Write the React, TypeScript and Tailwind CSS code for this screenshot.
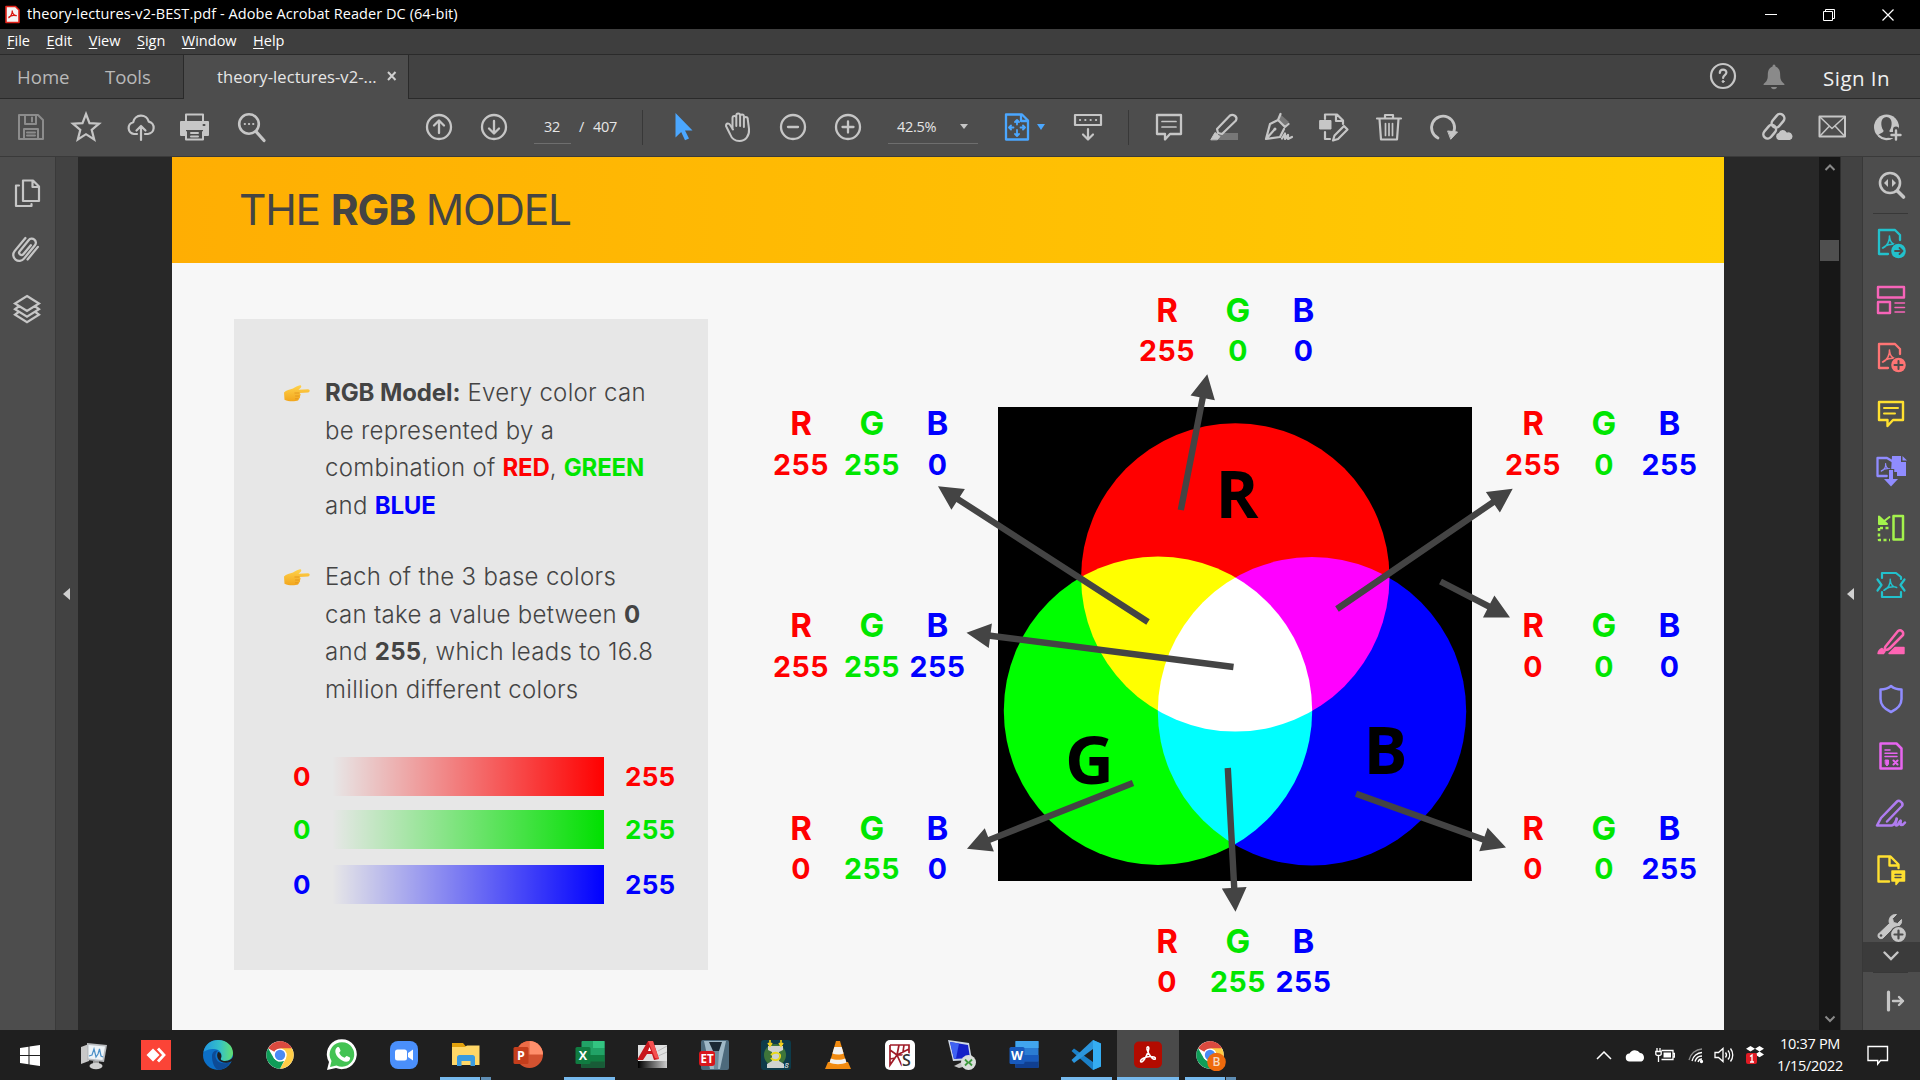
import type { ReactNode } from "react";

const RED = "#ff0000";
const GREEN = "#00e600";
const BLUE = "#0000ff";

/* 32-unit icon canvas shared by all toolbars */
function Ic({ children, c = "#c6c6c6", w = 2, s = 32 }: { children: ReactNode; c?: string; w?: number; s?: number }) {
  return (
    <svg width={s} height={s} viewBox="0 0 32 32" fill="none" stroke={c} strokeWidth={w} strokeLinejoin="round" strokeLinecap="round" className="block shrink-0">
      {children}
    </svg>
  );
}

function Cell({ children }: { children: ReactNode }) {
  return <div className="flex h-full w-[55px] shrink-0 items-center justify-center">{children}</div>;
}

function MenuItem({ k, rest }: { k: string; rest: string }) {
  return (
    <span>
      <span className="underline underline-offset-2">{k}</span>
      {rest}
    </span>
  );
}

function TitleBar() {
  return (
    <div className="flex h-[29px] items-center bg-black text-white">
      <svg width="15" height="19" viewBox="0 0 15 19" className="ml-[5px] shrink-0">
        <path d="M1 1.500h9.500L14 5v12.500H1z" fill="#f4f4f4" stroke="#e2231a" strokeWidth="1.600" strokeLinejoin="round" />
        <path d="M3.500 13c2-1 4-4.500 3.800-7.500M7.200 6c.3 3 2 4.600 4.600 4.700M3.500 12.500c2-2 5-2.500 8-1.800" fill="none" stroke="#d9150d" strokeWidth="1.300" />
      </svg>
      <span className="ml-[7px] whitespace-nowrap text-[14.500px] leading-none tracking-[0.070px]">theory-lectures-v2-BEST.pdf - Adobe Acrobat Reader DC (64-bit)</span>
      <svg width="12" height="12" viewBox="0 0 12 12" className="ml-auto" stroke="#fff">
        <path d="M0 5.500h12" />
      </svg>
      <svg width="12" height="12" viewBox="0 0 12 12" className="ml-[46px]" stroke="#fff" fill="none">
        <path d="M.5 2.500h9v9h-9zM2.500 2.500v-2h9v9h-2" />
      </svg>
      <svg width="12" height="12" viewBox="0 0 12 12" className="ml-[47px] mr-[26px]" stroke="#fff" strokeWidth="1.200">
        <path d="M.5.5l11 11M11.500.5l-11 11" />
      </svg>
    </div>
  );
}

function MenuBar() {
  return (
    <div className="flex h-[26px] items-center gap-[16.500px] border-b border-[#2a2a2a] bg-[#3e3e3e] pl-[7px] text-[14.500px] leading-none text-white">
      <MenuItem k="F" rest="ile" />
      <MenuItem k="E" rest="dit" />
      <MenuItem k="V" rest="iew" />
      <MenuItem k="S" rest="ign" />
      <MenuItem k="W" rest="indow" />
      <MenuItem k="H" rest="elp" />
    </div>
  );
}

function TabBar() {
  return (
    <div className="flex h-[44px] bg-[#424242]">
      <div className="flex w-[184px] items-center border-b border-r border-[#2a2a2a] pl-[17px] text-[18.600px] text-[#b9b9b9]">
        <span className="w-[88px]">Home</span>
        <span className="tracking-[-0.1px]">Tools</span>
      </div>
      <div className="flex w-[225px] items-center border-r border-[#2a2a2a] bg-[#4d4d4d] pl-[33px] text-[16.500px] text-[#e6e6e6]">
        <span className="w-[170px] whitespace-nowrap tracking-[0.080px]">theory-lectures-v2-...</span>
        <svg width="10" height="10" viewBox="0 0 10 10" stroke="#cfcfcf" strokeWidth="2" className="mb-[2px]">
          <path d="M1 1l7.500 8M8.500 1L1 9" />
        </svg>
      </div>
      <div className="flex flex-1 items-center border-b border-[#2a2a2a]">
        <div className="mb-[2px] ml-auto">
          <Ic w={2.200}>
            <circle cx="16" cy="16" r="12" />
            <path d="M12.800 13c0-4.500 6.600-4.300 6.600-.4 0 2.600-3.300 2.600-3.300 5.400" />
            <circle cx="16.100" cy="21.500" r="1" fill="#c6c6c6" strokeWidth="1" />
          </Ic>
        </div>
        <div className="ml-[19px]">
          <Ic c="none">
            <path d="M14.500 5.500a1.500 2 0 013 0c4 1.500 4.700 5 4.700 9 0 5 2 6.500 4.200 8.500v1H5.600v-1c2.200-2 4.200-3.500 4.200-8.500 0-4 .7-7.500 4.700-9zM13 26h6c-.6 3-5.400 3-6 0z" fill="#8a8a8a" />
          </Ic>
        </div>
        <span className="ml-[33px] mr-[30px] mt-[3px] whitespace-nowrap text-[20.500px] tracking-[0.450px] text-[#f0f0f0]">Sign In</span>
      </div>
    </div>
  );
}

const Divider = () => <div className="h-[35px] w-px shrink-0 bg-[#383838]" />;

function Toolbar() {
  return (
    <div className="flex h-[58px] items-center border-b border-[#3a3a3a] bg-[#4d4d4d] pb-px text-[#e6e6e6]">
      <div className="flex h-full pl-[3px]">
        <Cell>
          <Ic c="#8c8c8c">
            <path d="M4 4h19l5 5v19H4zM10 4v9h11V4M17 6.500v4M9 28V18h14v10M12 21.500h8M12 24.500h8" />
          </Ic>
        </Cell>
        <Cell>
          <Ic w={2.200}>
            <path strokeLinejoin="miter" d="M16 3l3.500 9.200 9.500.5-7.300 6.100 2.500 9.700L16 23.200l-8.200 5.300 2.500-9.700L3 12.700l9.500-.5z" />
          </Ic>
        </Cell>
        <Cell>
          <Ic w={2.200}>
            <path d="M12 23H9a6 6 0 01-.8-11.800 8 8 0 0115.600-.6A6.300 6.300 0 0123 23h-3M16 29V15M11.500 19.500L16 15l4.500 4.500" />
          </Ic>
        </Cell>
        <Cell>
          <div className="-ml-[3px]">
            <Ic>
              <path d="M8 10V3.500h17V10M8 21v7.500h17V21M13 22h7M13 25.500h7" />
              <path d="M3 11h27v13h-4v-6H7v6H3z" fill="#c6c6c6" />
              <path d="M25.500 14h1" stroke="#4d4d4d" />
            </Ic>
          </div>
        </Cell>
        <Cell>
          <Ic w={2.600}>
            <circle cx="14" cy="13" r="9.800" />
            <path d="M21 20.500l8 9" strokeWidth="3.200" />
            <path d="M9.800 13h.1M14 13h.1M18.200 13h.1" strokeWidth="2.200" />
          </Ic>
        </Cell>
      </div>
      <div className="ml-[133px] flex h-full">
        <Cell>
          <Ic w={2.300}>
            <circle cx="16" cy="16" r="12" />
            <path d="M16 22V10M11 14.500l5-5 5 5" />
          </Ic>
        </Cell>
        <Cell>
          <Ic w={2.300}>
            <circle cx="16" cy="16" r="12" />
            <path d="M16 10v12M11 17.500l5 5 5-5" />
          </Ic>
        </Cell>
      </div>
      <div className="ml-[13px] flex h-[34px] w-[37px] items-center justify-center border-b border-[#6e6e6e] pr-px text-[14.500px] tracking-[-0.3px]">32</div>
      <span className="ml-[8px] w-[14px] text-[14.500px]">/</span>
      <span className="w-[49px] text-[14.500px] tracking-[-0.3px]">407</span>
      <Divider />
      <div className="ml-[12px] flex h-full">
        <Cell>
          <Ic c="none">
            <path d="M9 2l17 17.500h-7.500l4 8-4 1.800-3.800-8.300L9 26.500z" fill="#4ba7ff" transform="translate(-.5 0)" />
          </Ic>
        </Cell>
        <Cell>
          <Ic w={2}>
            <path d="M9.500 18V7a1.900 1.900 0 013.800 0v8V4.500a1.900 1.900 0 013.800 0V15 5.500a1.900 1.900 0 013.800 0V16 8a1.900 1.900 0 013.800 0l1.300 10c.6 7-3.500 12-9.500 12-5 0-8-3-9.500-7l-4-8c0-3 3-3.500 4.500-.5l2.500 4" transform="translate(1 0)" />
          </Ic>
        </Cell>
        <Cell>
          <Ic w={2.300}>
            <circle cx="16" cy="16" r="12" />
            <path d="M11 16h10" />
          </Ic>
        </Cell>
        <Cell>
          <Ic w={2.300}>
            <circle cx="16" cy="16" r="12" />
            <path d="M10.500 16h11M16 10.500v11" />
          </Ic>
        </Cell>
      </div>
      <div className="ml-[13px] flex h-[34px] w-[90px] items-center border-b border-[#6e6e6e] pl-[9px] text-[14.500px] tracking-[-0.3px]">
        42.5%
        <span className="ml-auto mr-[10px] border-x-[4.500px] border-t-[5px] border-x-transparent border-t-[#c6c6c6]" />
      </div>
      <div className="ml-[23px]">
        <Ic c="#4ba7ff" w={2.300}>
          <path d="M5 3.500h16l6 6v19H5zM20 3.500V10h7" />
          <path strokeWidth="1.800" d="M16 9.500v4M16 19v5.500M8.500 16.500h4M19.500 16.500h4.500M14 11l2-2 2 2M14 23l2 2 2-2M10 14.500l-2 2 2 2M22 14.500l2 2-2 2" />
        </Ic>
      </div>
      <span className="ml-[4px] border-x-[4px] border-t-[6px] border-x-transparent border-t-[#4ba7ff]" />
      <div className="ml-[27px]">
        <Ic w={2.200}>
          <path d="M3 4h26v10H3zM16 18v10M11 23.500l5 5 5-5" />
          <path d="M8 9h.1M13.300 9h.1M18.600 9h.1M24 9h.1" />
        </Ic>
      </div>
      <div className="ml-[24px]">
        <Divider />
      </div>
      <div className="ml-[12px] flex h-full">
        <Cell>
          <Ic w={2.300}>
            <path d="M4 4h24v19H17l-5 5.500V23H4z" />
            <path d="M9 10.500h14M9 16h14" strokeWidth="1.700" />
          </Ic>
        </Cell>
        <Cell>
          <Ic w={2.200}>
            <path d="M12 22h18v7H10z" fill="#777" stroke="none" />
            <path d="M9 18L22 4.500c3-2 8 1 6 5L14 23l-4-1z" fill="#4d4d4d" />
            <path d="M3 28.500l4-7 5 4-2.500 3z" fill="#c6c6c6" strokeWidth="1" />
          </Ic>
        </Cell>
        <Cell>
          <Ic w={2.200}>
            <path d="M17 3l9 8-4 4-7-7z" fill="#777" stroke="none" />
            <path d="M17.500 3L15 9l-8 4-4 15 14-2 4-8M15 9l7 7 3.500-3M3.500 27.500l8-9" />
            <circle cx="12" cy="18" r="1.500" fill="#c6c6c6" stroke="none" />
            <path d="M19 27.500l3-5v5.500l3-4v4l4-2" />
          </Ic>
        </Cell>
        <Cell>
          <Ic w={2.200}>
            <path d="M2 9.500h11V18H2z" fill="#c6c6c6" strokeWidth="1" />
            <path d="M7 8V3.500h12l6 6V13M18 4v6h7M7 21v7h5" />
            <path d="M15 29.500l1.500-5L26 15l3.500 3.500-9.500 9.500z" />
          </Ic>
        </Cell>
        <Cell>
          <Ic w={2.200}>
            <path d="M4 7.500h24M12 7V4h8v3M6.500 8l1.500 20.500h16L25.500 8" />
            <path d="M12.500 12.500v12M16 12.500v12M19.500 12.500v12" strokeWidth="1.700" />
          </Ic>
        </Cell>
        <Cell>
          <Ic w={2.800}>
            <path d="M10 27A11.500 11.500 0 1125.500 21.500" />
            <path d="M20 20l9.500 1-6.500 7z" fill="#c6c6c6" strokeWidth="1" />
          </Ic>
        </Cell>
      </div>
      <div className="ml-auto flex h-full pr-[6px]">
        <Cell>
          <Ic w={2.500}>
            <rect x="-7.500" y="-4.300" width="15" height="8.600" rx="4.300" transform="translate(8.700 20.800) rotate(-50)" />
            <rect x="-7.500" y="-4.300" width="15" height="8.600" rx="4.300" transform="translate(17 9.800) rotate(-50)" />
            <path d="M17.500 29.500a4.200 4.200 0 01-.2-8 4.800 4.800 0 018.700-.5 4.300 4.300 0 013 8.500z" fill="#c6c6c6" stroke="#4d4d4d" strokeWidth="1.200" />
          </Ic>
        </Cell>
        <Cell>
          <Ic w={2}>
            <path d="M3.500 5.500h25.500v20H3.500z" />
            <path d="M4 6l12 11.500L28.500 6M4 25l9-9.500M28.500 25l-9-9.500" strokeWidth="1.500" />
          </Ic>
        </Cell>
        <Cell>
          <Ic w={2.200}>
            <circle cx="15.500" cy="16" r="12.500" fill="#c6c6c6" stroke="none" />
            <path d="M15.500 6c-6 0-6.500 9-3 13.500.5 2.500-4 2.500-5.500 5 4 4 13 4.500 16 0-1.500-2.500-5-2.500-4.500-5C22 15 21.500 6 15.500 6z" fill="#4d4d4d" stroke="none" />
            <path d="M8 25c4 4 10 4 14 1" />
            <path d="M25 18.500v11M19.500 24h11" stroke="#4d4d4d" strokeWidth="6" />
            <path d="M25 19.500v9M20.500 24h9" strokeWidth="2.400" />
          </Ic>
        </Cell>
      </div>
    </div>
  );
}

function LeftRail() {
  return (
    <>
      <div className="flex w-[56px] shrink-0 flex-col border-r border-[#3a3a3a] bg-[#4d4d4d] pl-[11px]">
        <div className="mt-[20px]">
          <Ic w={2.200}>
            <path d="M12 3.500h10l6 6V24H12zM21.500 3.500V10h6.500M8 8.500H5V29h15.500v-2" />
          </Ic>
        </div>
        <div className="-ml-[1px] mt-[24px]">
          <Ic w={2.300}>
            <path d="M21 12.500l-8 8.500a2.300 2.300 0 01-3.400-3.200l9.500-10.500a4 4 0 016 5.500L13.500 25.500a6 6 0 01-9-8L16 5M28 14.500L17 26.500" transform="rotate(-3 16 16)" />
          </Ic>
        </div>
        <div className="mt-[28px]">
          <Ic w={2.200}>
            <path strokeLinejoin="miter" d="M16 3l12 7.500-12 7.500-12-7.500zM7 14l-3 2.200 12 7.500 12-7.500-3-2.200M7 19.500l-3 2.200 12 7.500 12-7.500-3-2.200" />
          </Ic>
        </div>
      </div>
      <div className="flex w-[22px] shrink-0 items-center justify-center bg-[#424242] pr-[2px]">
        <span className="border-y-[6px] border-r-[7px] border-y-transparent border-r-[#d0d0d0]" />
      </div>
    </>
  );
}

const pdfMark = "M9 21c4-2 7-7 6.500-12M15.500 10c.5 5 3 7.500 7 8M8.500 21c3-3 9-4.500 13.500-3.500";

function RightRail() {
  const slot = "flex h-[57px] w-full shrink-0 items-center justify-center";
  return (
    <div className="flex w-[58px] shrink-0 flex-col items-center border-l border-[#383838] bg-[#4d4d4d] pr-[2px]">
      <div className="flex h-[57px] w-[35px] items-center justify-center border-b border-[#383838]">
        <Ic w={2.600}>
          <circle cx="15" cy="14" r="10" />
          <path d="M22.500 22l6 6" strokeWidth="3.600" />
          <path d="M13 10v8l-4-4zM17 10v8l4-4z" fill="#c6c6c6" stroke="none" />
        </Ic>
      </div>
      <div className="flex h-[728px] w-full flex-col overflow-hidden">
        <div className={slot}>
          <Ic c="#22c1cc" w={2.300}>
            <path d="M13 27H4V3h16l5 5v5" />
            <path d={pdfMark} strokeWidth="1.600" transform="translate(-1 0)" />
            <circle cx="23.500" cy="24" r="8.300" fill="#4d4d4d" stroke="none" />
            <circle cx="23.500" cy="24" r="7.300" fill="#22c1cc" stroke="none" />
            <path d="M20 24h7M24.500 21l3 3-3 3" stroke="#4d4d4d" strokeWidth="1.800" />
          </Ic>
        </div>
        <div className={slot}>
          <Ic c="#f764b9" w={2.400}>
            <path d="M3 3h26v10.500H3zM3 18h12v11H3z" />
            <path d="M20 19h9.500M20 23.500h9.500M20 28h9.500" strokeWidth="1.500" />
          </Ic>
        </div>
        <div className={slot}>
          <Ic c="#ff7474" w={2.300}>
            <path d="M13 27H4V3h16l5 5v5" />
            <path d={pdfMark} strokeWidth="1.600" transform="translate(-1 0)" />
            <circle cx="23.500" cy="24" r="8.300" fill="#4d4d4d" stroke="none" />
            <circle cx="23.500" cy="24" r="7.300" fill="#ff7474" stroke="none" />
            <path d="M19.500 24h8M23.500 20v8" stroke="#4d4d4d" strokeWidth="2" />
          </Ic>
        </div>
        <div className={slot}>
          <Ic c="#ffe030" w={2.400}>
            <path d="M4 4h24v18H18l-5.500 6V22H4z" />
            <path d="M9 10h14M9 15.500h11" strokeWidth="2" />
          </Ic>
        </div>
        <div className={slot}>
          <Ic c="#908cff" w={2.300}>
            <path d="M12 21H2.500V3H12l5 3" />
            <path d="M17 1h9v6h5v14h-9v-4h-6z" fill="#908cff" stroke="none" />
            <path d="M27.500 1v4.500H32z" fill="#908cff" stroke="none" />
            <path d={pdfMark} strokeWidth="2" transform="translate(1 3) scale(.62)" />
            <path d="M16 14v11" stroke="#4d4d4d" strokeWidth="6.500" strokeLinecap="butt" />
            <path d="M16 15v10" strokeWidth="4" strokeLinecap="butt" />
            <path d="M9 24h14l-7 7.500z" fill="#908cff" stroke="none" />
          </Ic>
        </div>
        <div className={slot}>
          <Ic c="#a4f34c" w={2.500}>
            <path d="M18.500 4H28v23.500h-9.500z" />
            <path d="M14.500 5L8 10M4 4.500V12h8z" fill="#a4f34c" strokeWidth="2" />
            <path d="M4 16v12h11M5 16h10" strokeDasharray="3 2.500" strokeLinecap="butt" />
          </Ic>
        </div>
        <div className={slot}>
          <Ic c="#22c1cc" w={2.200}>
            <path d="M7 9V4h14l5 4M7 23v5h19v-5M26 8v2M2.500 10.500l4 5.500-4 5.500M29.500 10.500l-4 5.500 4 5.500" />
            <path d={pdfMark} strokeWidth="1.600" transform="translate(1 2) scale(.92)" />
          </Ic>
        </div>
        <div className={slot}>
          <Ic c="#ff64b4" w={2.500}>
            <path d="M10.500 20.500L23 5c3-2 6 1 5 4L15 22c-1.500 1.500-3.500 2-4.500 2-1-.5-1-2 0-3.500z" />
            <path d="M3 27.500c.5-3 2-4 4-5l3 3-1.500 2zM14 27.500l6-6h9v6z" fill="#ff64b4" strokeWidth="1.400" />
          </Ic>
        </div>
        <div className={slot}>
          <Ic c="#908cff" w={2.500}>
            <path d="M16 3c3 2.500 7 3.500 10.500 3.500V16c0 6-5 10.500-10.500 13C10.500 26.500 5.500 22 5.500 16V6.500C9 6.500 13 5.500 16 3z" />
          </Ic>
        </div>
        <div className={slot}>
          <Ic c="#e765f0" w={2.500}>
            <path d="M5.500 3.500h16l5 5v20h-21z" />
            <path d="M10 10h5M10 13.200h12M10 16.500h12" strokeWidth="1.500" />
            <path d="M10.500 20h3v4l-1.500 2-1.500-2z" fill="#e765f0" strokeWidth="1" />
            <path d="M18.500 20.500l4 4M22.500 20.500l-4 4" strokeWidth="2" />
          </Ic>
        </div>
        <div className={slot}>
          <Ic c="#b07cf0" w={2.500}>
            <path d="M12 24.500L27 9c2-3-3-6.500-5-4.500L6 21 2 28.500h14.500c3 0 5-6 5-7 1.500 0-3 7 0 7 2 0 3-5 4-5s-1 4.500.5 4.500 3-1 4-2.500" />
          </Ic>
        </div>
        <div className={slot}>
          <Ic c="#ffe030" w={2.400}>
            <path d="M14 27.500H3.500V2.500h12l8 8V14M14.500 3v8.500h8" />
            <path d="M17 17h12.500v10H24l-3 3.500V27h-4z" fill="#ffe030" strokeWidth="1.500" />
            <path d="M20 20.500h6M20 23.500h6" stroke="#4d4d4d" strokeWidth="1.300" />
          </Ic>
        </div>
        <div className={slot}>
          <Ic c="#c6c6c6">
            <path d="M3.500 23L14.500 12.500c-1.500-4 1-9.500 7-9l-4 4 1 4 4 1 4-4c1 5-3.500 8.500-8 8L8 27c-3 2-6.500-1-4.500-4z" fill="#c6c6c6" strokeWidth="1" />
            <circle cx="6" cy="24.500" r="1.300" fill="#4d4d4d" stroke="none" />
            <circle cx="23.500" cy="23.500" r="8" fill="#c6c6c6" stroke="#4d4d4d" strokeWidth="1.200" />
            <path d="M19.500 23.500h8M23.500 19.500v8" stroke="#4d4d4d" strokeWidth="2.200" />
          </Ic>
        </div>
      </div>
      <div className="-mr-[2px] flex h-[30px] w-[57px] items-center justify-center bg-[#3b3b3b] pb-[2px] pr-[2px]">
        <svg width="16" height="10" viewBox="0 0 16 10" fill="none" stroke="#c6c6c6" strokeWidth="2.400" strokeLinecap="round">
          <path d="M1.500 1.500L8 8l6.500-6.500" />
        </svg>
      </div>
      <div className="flex h-[58px] w-[35px] items-center justify-center border-t border-[#383838] pb-[2px]">
        <Ic w={2.400}>
          <path d="M13.500 7v18" strokeWidth="3.200" />
          <path d="M18 16h10M24 12l4 4-4 4" />
        </Ic>
      </div>
    </div>
  );
}

function PointingHand() {
  return (
    <svg width="26" height="17" viewBox="0 0 26 17" className="mt-[11px] shrink-0">
      <defs>
        <linearGradient id="hand" x1="0" y1="0" x2="0" y2="1">
          <stop offset="0" stopColor="#ffd24a" />
          <stop offset="1" stopColor="#f2a61d" />
        </linearGradient>
      </defs>
      <path d="M0 7.500C2 5 6 4.800 9 3.500c2-1 5-3 7-3.200 1.500 0 1.700 1.700.5 2.600L14.500 4.700l9.500-.4c2.200 0 2.300 3 0 3.200L15.500 8c1.500 1 1.500 2.200.3 3 .7 1.200.2 2.400-1 2.800 0 1.500-1 2.200-3 2.300C8 16.500 4 16.500.5 14.800z" fill="url(#hand)" />
      <path d="M15.500 8h-5M15.600 11h-4.500M14.600 13.800H11" stroke="#e08f1a" strokeWidth=".8" fill="none" />
    </svg>
  );
}

function GradientRow({ color, bar, gap }: { color: string; bar: string; gap: string }) {
  return (
    <div className={`flex h-[39px] items-center text-[26px] font-bold leading-none ${color} ${gap}`}>
      <span className="w-[39px] pt-[1px]">0</span>
      <div className={`h-full w-[272px] bg-linear-to-r from-transparent ${bar}`} />
      <span className="ml-[21px] pt-[1px] tracking-[0.3px]">255</span>
    </div>
  );
}

function InfoPanel() {
  return (
    <div className="ml-[62px] mt-[56px] h-[651px] w-[474px] shrink-0 bg-[#e7e7e7] pl-[50px] pt-[55px] text-[24px] font-light leading-[37.700px] tracking-[0.3px] text-[#444]">
      <div className="flex gap-[15px]">
        <PointingHand />
        <p className="whitespace-nowrap">
          <b className="font-bold tracking-[-0.1px]">RGB Model:</b> Every color can
          <br />
          be represented by a
          <br />
          combination of <b className="font-bold tracking-[-0.2px] text-[#ff0000]">RED</b>, <b className="font-bold tracking-[-0.2px] text-[#00e600]">GREEN</b>
          <br />
          and <b className="font-bold tracking-[-0.2px] text-[#0000ff]">BLUE</b>
        </p>
      </div>
      <div className="mt-[33px] flex gap-[15px]">
        <PointingHand />
        <p className="whitespace-nowrap">
          Each of the 3 base colors
          <br />
          can take a value between <b className="font-bold">0</b>
          <br />
          and <b className="font-bold">255</b>, which leads to 16.8
          <br />
          million different colors
        </p>
      </div>
      <div className="mt-[48px] flex flex-col pl-[9px] tracking-normal">
        <GradientRow color="text-[#ff0000]" bar="to-[#ff0000]" gap="" />
        <GradientRow color="text-[#00e600]" bar="to-[#00e000]" gap="mt-[14px]" />
        <GradientRow color="text-[#0000ff]" bar="to-[#0000ff]" gap="mt-[16px]" />
      </div>
    </div>
  );
}

/* x of the R column, letter baseline, digit baseline and the three channel values */
const groups: [number, number, number, string, string, string][] = [
  [1167, 322, 361, "255", "0", "0"],
  [801, 435, 475, "255", "255", "0"],
  [801, 637, 677, "255", "255", "255"],
  [801, 840, 879, "0", "255", "0"],
  [1533, 435, 475, "255", "0", "255"],
  [1533, 637, 677, "0", "0", "0"],
  [1533, 840, 879, "0", "0", "255"],
  [1167, 953, 992, "0", "255", "255"],
];

/* tail x/y, tip x/y */
const arrows = [
  [1180.800, 510, 1207.300, 374.300],
  [1148, 622, 938, 486.300],
  [1233.500, 667, 966.500, 632.700],
  [1133, 783, 967, 848.700],
  [1227.800, 768, 1235.500, 911.700],
  [1337, 609, 1512.700, 488.800],
  [1440.500, 581.500, 1510, 617.500],
  [1356, 793.700, 1506, 847.600],
];

function ColorDiagram() {
  return (
    <svg width="1016" height="767" viewBox="708 263 1016 767" className="block shrink-0">
      <rect x="998" y="407" width="474" height="474" fill="#000" />
      <g className="isolate">
        <circle cx="1235.300" cy="577.400" r="154.200" fill="#f00" />
        <circle cx="1158" cy="710.700" r="154.200" fill="#0f0" className="mix-blend-screen" />
        <circle cx="1312" cy="711.300" r="154.200" fill="#00f" className="mix-blend-screen" />
      </g>
      <g fontFamily="Open Sans" fontWeight="700" fontSize="67" fill="#000">
        <text x="1215.500" y="518" textLength="43" lengthAdjust="spacingAndGlyphs">R</text>
        <text x="1065" y="783.500" textLength="49" lengthAdjust="spacingAndGlyphs">G</text>
        <text x="1363.500" y="774" textLength="44" lengthAdjust="spacingAndGlyphs">B</text>
      </g>
      {arrows.map(([x1, y1, x2, y2], i) => {
        const len = Math.hypot(x2 - x1, y2 - y1);
        const ang = (Math.atan2(y2 - y1, x2 - x1) * 180) / Math.PI;
        return (
          <path
            key={i}
            transform={`translate(${x1} ${y1}) rotate(${ang})`}
            fill="#444"
            d={`M0 -3.200H${len - 24}V-12.400L${len} 0L${len - 24} 12.400V3.200H0z`}
          />
        );
      })}
      <g fontFamily="Inter" fontWeight="700" textAnchor="middle">
        {groups.map(([x, y, y2, r, g, b], i) => (
          <g key={i}>
            <g fontSize="33">
              <text x={x} y={y} fill={RED}>R</text>
              <text x={x + 71} y={y} fill={GREEN}>G</text>
              <text x={x + 136.500} y={y} fill={BLUE}>B</text>
            </g>
            <g fontSize="28.500" letterSpacing=".5">
              <text x={x} y={y2} fill={RED}>{r}</text>
              <text x={x + 71} y={y2} fill={GREEN}>{g}</text>
              <text x={x + 136.500} y={y2} fill={BLUE}>{b}</text>
            </g>
          </g>
        ))}
      </g>
    </svg>
  );
}

function Slide() {
  return (
    <div className="flex w-[1552px] shrink-0 flex-col overflow-hidden bg-[#f7f7f7] font-['Inter',sans-serif]">
      <div className="flex h-[106px] shrink-0 items-center bg-linear-to-r from-[#ffae03] to-[#ffcd03] pl-[67px]">
        <h1 className="whitespace-nowrap text-[42.500px] leading-none tracking-[-1.200px] text-[#444]">
          THE <b className="font-bold">RGB</b> MODEL
        </h1>
      </div>
      <div className="flex">
        <InfoPanel />
        <ColorDiagram />
      </div>
    </div>
  );
}

function ScrollBar() {
  return (
    <div className="flex w-[21px] shrink-0 flex-col items-center bg-[#171717]">
      <svg width="12" height="8" viewBox="0 0 12 8" className="mt-[7px]" fill="none" stroke="#8a8a8a" strokeWidth="2">
        <path d="M1.500 6L6 1.500 10.500 6" />
      </svg>
      <div className="mt-[68px] h-[21px] w-[19px] bg-[#4f4f4f]" />
      <svg width="12" height="8" viewBox="0 0 12 8" className="mb-[7px] mt-auto" fill="none" stroke="#8a8a8a" strokeWidth="2">
        <path d="M1.500 1.500L6 6l4.500-4.500" />
      </svg>
    </div>
  );
}

/* ---------- taskbar ---------- */

const T = ({ children }: { children: ReactNode }) => (
  <svg width="32" height="32" viewBox="0 0 32 32" className="block">
    {children}
  </svg>
);

function ChromeGlyph() {
  return (
    <g>
      <circle cx="16" cy="16" r="13.700" fill="#fff" />
      <path d="M16 16L4.140 9.150A13.700 13.700 0 0127.860 9.150z" fill="#db4a3f" />
      <path d="M16 2.300A13.700 13.700 0 0127.860 9.150H16z" fill="#db4a3f" />
      <path d="M27.860 9.150A13.700 13.700 0 0116 29.700L22 19.500 22.500 14 16 9.150z" fill="#ffcd46" />
      <path d="M16 29.700A13.700 13.700 0 014.140 9.150L10 19.500l4.500 3 5.500-.5z" fill="#0f9d58" />
      <circle cx="16" cy="16" r="6.600" fill="#fff" />
      <circle cx="16" cy="16" r="5.200" fill="#4a8af4" />
    </g>
  );
}

function OfficeTile({ letter, color }: { letter: string; color: string }) {
  return (
    <g>
      <rect x="1.500" y="8" width="15" height="17" rx="1.500" fill={color} />
      <text x="9" y="21" fontFamily="Open Sans" fontSize="12.500" fontWeight="700" fill="#fff" textAnchor="middle">{letter}</text>
    </g>
  );
}

const apps: { icon: ReactNode; run?: "one" | "many" | "active" }[] = [
  {
    icon: (
      <T>
        <path d="M3 8l8-3v17l-8 3z" fill="#c8c8c8" />
        <path d="M9 4l20 2-3 17-17-2z" fill="#b9bcbf" />
        <path d="M10.500 6l16.500 1.500-2.500 13.500-14-1.500z" fill="#eef4f8" />
        <path d="M11 17l3-1 2-6 2 8 2-3 1.500-5 1.500 7 2 1" fill="none" stroke="#4a90c8" strokeWidth="1.200" />
        <path d="M15 22h6v4h-6z" fill="#9a9a9a" />
        <ellipse cx="18" cy="27" rx="6.500" ry="3.300" fill="#d0d0d0" />
      </T>
    ),
  },
  {
    icon: (
      <T>
        <rect x="1" y="1" width="30" height="30" fill="#fb4437" />
        <path d="M13 9.500l6.500 6.500-6.500 6.500L6.500 16z" fill="#fff" />
        <path d="M18 9.500l6 6.500-6 6.500" fill="none" stroke="#fff" strokeWidth="2.800" />
      </T>
    ),
  },
  {
    icon: (
      <T>
        <defs>
          <linearGradient id="edgeTop" x1="0" x2="1">
            <stop offset="0" stopColor="#2196e0" />
            <stop offset=".55" stopColor="#35c1c8" />
            <stop offset="1" stopColor="#63e070" />
          </linearGradient>
        </defs>
        <circle cx="16" cy="16" r="15" fill="#0c6fc7" />
        <path d="M1.500 13C3 5 9 1 16 1c9 0 15 6 15 13 0 5-4 8-8 8-3 0-5-1-4-3 2-5-2-9-7-9-5 0-9 1.500-10.500 3z" fill="url(#edgeTop)" />
        <path d="M10 17c0-4 3-6 6-5.500-4 3-3 9 1 11.500 4 2 8 1.500 12-.5-3 5-8 8.500-13 8.500-4-2-6-8-6-14z" fill="#0d4b96" />
        <path d="M16 13c3 0 4 4 3 6-1 2 1 3 4 3 4 0 7-2 8-4v4l-5 1.500c-8 1.500-13-5-10-10.500z" fill="#1f1f1f" />
      </T>
    ),
  },
  { icon: <T><ChromeGlyph /></T> },
  {
    icon: (
      <T>
        <path d="M1 31l2-8A15 15 0 1110 29z" fill="#fff" />
        <path d="M4 28l1.500-6A12.300 12.300 0 1110.500 26.500z" fill="#43c353" />
        <path d="M11 8.500c1-.7 2-.5 2.500.5l1 2.500c.2.700-1 1.800-1.300 2.300 1 2.500 3 4.200 5.500 5 .6-.3 1.500-2 2.200-1.700l3 1.500c.6.500 0 2.600-1 3.300-3 2-7.500-.2-10.500-3.200S8 11 11 8.500z" fill="#fff" />
      </T>
    ),
  },
  {
    icon: (
      <T>
        <rect x="2" y="2" width="28" height="28" rx="8" fill="#4a8ffb" />
        <rect x="7" y="10.500" width="12" height="11" rx="2.500" fill="#fff" />
        <path d="M20 14l5-3.500v11L20 18z" fill="#fff" />
      </T>
    ),
  },
  {
    icon: (
      <T>
        <path d="M2 4h11l2.500 3H28v4H2z" fill="#e2a10c" />
        <path d="M2 8h13l2-1.500h12.500V26H2z" fill="#ffd767" />
        <path d="M7 27V18.500c0-1.500 1-2.500 2.500-2.500h13c1.500 0 2.500 1 2.500 2.500V27h-4.500v-5h-9v5z" fill="#3a9be0" />
      </T>
    ),
    run: "many",
  },
  {
    icon: (
      <T>
        <circle cx="17.500" cy="15.500" r="13.500" fill="#d35230" />
        <path d="M17.500 2v13.500H4A13.500 13.500 0 0117.500 2z" fill="#ed6c47" />
        <path d="M17.500 2A13.500 13.500 0 0131 15.500H17.500z" fill="#ff8f6b" />
        <OfficeTile letter="P" color="#c43e1c" />
      </T>
    ),
  },
  {
    icon: (
      <T>
        <rect x="7.500" y="2" width="23" height="27" rx="1" fill="#21a366" />
        <rect x="19" y="2" width="11.500" height="7" fill="#33c481" />
        <rect x="19" y="9" width="11.500" height="7" fill="#21a366" />
        <rect x="7.500" y="16" width="11.500" height="7" fill="#107c41" />
        <rect x="19" y="16" width="11.500" height="7" fill="#107c41" />
        <rect x="7.500" y="22.500" width="23" height="6.500" fill="#185c37" />
        <OfficeTile letter="X" color="#107c41" />
      </T>
    ),
    run: "one",
  },
  {
    icon: (
      <T>
        <defs>
          <linearGradient id="cad" x1="0" x2="1">
            <stop offset="0" stopColor="#000" />
            <stop offset="1" stopColor="#ccc" />
          </linearGradient>
        </defs>
        <path d="M2 6h29v16H2z" fill="#e0e0e0" />
        <path d="M2 22h29v7H2z" fill="url(#cad)" />
        <path d="M22 12l9-5M20 18l11-5" stroke="#bbb" />
        <path d="M1 21L12 2h5l6 18-5 1-2-6h-5l-4 6z" fill="#c8161c" />
        <path d="M12 2h5l6 18-4-1z" fill="#f45050" />
        <path d="M12 12l1.500-4L15 12z" fill="#fff" />
      </T>
    ),
  },
  {
    icon: (
      <T>
        <rect x="3" y="1" width="28" height="30" rx="2" fill="#4d6a7c" />
        <path d="M6 2h22l-6 28H12z" fill="#9fb8c6" />
        <path d="M11 3h13l-3 9h-6z" fill="#1c2a34" />
        <path d="M15 12h6l-1 18h-4z" fill="#6f8c9c" />
        <rect x="1" y="12" width="16" height="15" rx="3" fill="#d8161c" />
        <text x="9" y="24" fontSize="11.500" fontWeight="700" fontFamily="Open Sans" fill="#fff" textAnchor="middle">ET</text>
      </T>
    ),
  },
  {
    icon: (
      <T>
        <rect x="1" y="1" width="30" height="30" rx="3" fill="#0d3b4a" />
        <circle cx="15" cy="16" r="11" fill="#4f8a35" opacity=".75" />
        <path d="M8 7h15v4l-4 2v9l5 3v4H7v-4l5-3v-9L8 11z" fill="#cfd3d0" />
        <path d="M10 1v5M21 1v5M8 4l2 3 2-3M19 4l2 3 2-3" stroke="#f4d21c" strokeWidth="1.600" fill="none" />
        <path d="M11 16c4-4 10-2 9 2s-7 4-9 1" stroke="#e8d81c" strokeWidth="1.800" fill="none" />
        <text x="26.500" y="29" fontSize="8" fontFamily="Open Sans" fontStyle="italic" fill="#fff" textAnchor="middle">8</text>
      </T>
    ),
  },
  {
    icon: (
      <T>
        <path d="M6 23h20l3 7H3z" fill="#f08a10" />
        <path d="M14 2h4l7 24c-4 2.500-14 2.500-18 0z" fill="#f28c12" />
        <path d="M12.300 8h7.400l1.900 6.500c-3 1.300-8 1.300-11.200 0zM8.800 19.500c4 1.700 10.500 1.700 14.400 0l1.300 4c-4.500 2.200-12.500 2.200-17 0z" fill="#f2f2f2" />
      </T>
    ),
  },
  {
    icon: (
      <T>
        <rect x="1" y="1" width="30" height="30" rx="5" fill="#fff" />
        <path d="M6 6h19v9M6 6v20l7-10 5 11M6 11l7 5 12-6M15 6l-2 10M6 20l5-1M13 16h6M20 6l-1 7" fill="none" stroke="#a01c28" strokeWidth="1.700" />
        <text x="22.500" y="27" fontSize="16" fontWeight="600" fontFamily="Open Sans" fill="#333" stroke="#fff" strokeWidth="2" paintOrder="stroke" textAnchor="middle">S</text>
      </T>
    ),
  },
  {
    icon: (
      <T>
        <path d="M2 1l21 3 3 17-19 1z" fill="#cdd6e4" />
        <path d="M4 3l18 3 2 13-16 1z" fill="#1420c8" />
        <path d="M4 3l9 1.500-3 15L8 20z" fill="#3f62f2" />
        <path d="M8 27l8-4 5 4-8 2z" fill="#c4c4c4" />
        <circle cx="22.500" cy="23.500" r="7.500" fill="#d9dedb" />
        <path d="M19 20.500l3 3-3 3M26 20.500l-3 3 3 3" stroke="#3f9a3f" strokeWidth="1.800" fill="none" />
      </T>
    ),
  },
  {
    icon: (
      <T>
        <rect x="7.500" y="2" width="23" height="27" rx="1" fill="#2b7cd3" />
        <rect x="7.500" y="2" width="23" height="7" fill="#41a5ee" />
        <rect x="7.500" y="16" width="23" height="6.500" fill="#185abd" />
        <rect x="7.500" y="22.500" width="23" height="6.500" fill="#103f91" />
        <OfficeTile letter="W" color="#185abd" />
      </T>
    ),
  },
  {
    icon: (
      <T>
        <path d="M23 1l8 3.500v23L23 31 1.500 12l2.500-2.500L23 23z" fill="#1b80c8" />
        <path d="M23 1v9L4 24 1.500 21z" fill="#2b95dc" />
        <path d="M23 1l8 3.500v23L23 31z" fill="#35adf2" />
      </T>
    ),
    run: "one",
  },
  {
    icon: (
      <T>
        <rect x="2" y="2.500" width="28" height="26.500" rx="5" fill="#b30b00" />
        <path d="M8.800 22.800c-1.800-2.300 5.500-5.300 9-5.300s6 .5 5.500 2.300c-1 2-6.500-2.300-8.300-9.500-.5-3 2-3.500 1.800-.5-.3 4-5.500 14.500-8 13z" fill="none" stroke="#fff" strokeWidth="1.600" strokeLinejoin="round" />
      </T>
    ),
    run: "active",
  },
  {
    icon: (
      <T>
        <ChromeGlyph />
        <circle cx="22.500" cy="23" r="9.300" fill="#ee6a0c" />
        <text x="22.500" y="27.300" fontSize="12" fontFamily="Open Sans" fontWeight="600" fill="#f7d9c2" textAnchor="middle">B</text>
      </T>
    ),
    run: "many",
  },
];

function Taskbar() {
  return (
    <div className="flex h-[50px] shrink-0 bg-[#1f1f1f] text-white">
      <div className="flex w-[62.500px] shrink-0 items-center justify-center">
        <svg width="20" height="21" viewBox="0 0 20 21" fill="#fff" className="mr-[2px]">
          <path d="M0 3l8.500-1.200v8.100H0zM9.500 1.600L20 0v9.900H9.500zM0 11h8.500v8.200L0 18zM9.500 11H20v10L9.500 19.400z" />
        </svg>
      </div>
      {apps.map(({ icon, run }, i) => (
        <div key={i} className={`flex w-[62.060px] shrink-0 flex-col items-center ${run === "active" ? "bg-[#4a4a4a]" : ""}`}>
          <div className="mt-[9px]">{icon}</div>
          <div className="mt-auto flex h-[3px] w-full justify-center">
            {run === "active" && <div className="w-full bg-[#76b9ed]" />}
            {run === "one" && <div className="w-[51px] bg-[#76b9ed]" />}
            {run === "many" && (
              <>
                <div className="w-[40px] bg-[#76b9ed]" />
                <div className="ml-px w-[10px] bg-[#5e8db3]" />
              </>
            )}
          </div>
        </div>
      ))}
      <div className="ml-auto flex items-center">
        <svg width="16" height="9" viewBox="0 0 16 9" fill="none" stroke="#fff" strokeWidth="1.500">
          <path d="M1 8l7-7 7 7" />
        </svg>
        <svg width="21" height="13" viewBox="0 0 21 13" fill="#fff" className="ml-[13px]">
          <path d="M5 12.500a4 4 0 01-.5-8A6 6 0 0115 4a4.500 4.500 0 011.500 8.500z" />
        </svg>
        <svg width="20" height="16" viewBox="0 0 20 16" fill="none" stroke="#fff" strokeWidth="1.300" className="ml-[9px]">
          <path d="M6.500 3.500h11.500v9H6.500M18 6.500h1.500v3.500H18" />
          <path d="M8.500 5.500H16v5H8.500z" fill="#fff" stroke="none" />
          <path d="M2 1v3M5 1v3M.8 4.500h5.400v2.500c0 2-5.400 2-5.400 0zM3.500 9v6" />
        </svg>
        <svg width="18" height="18" viewBox="0 0 18 18" fill="none" stroke="#fff" strokeWidth="1.300" className="ml-[12px]">
          <path d="M2 14A14 14 0 0115 3" opacity=".5" />
          <path d="M5 15A11 11 0 0115 6.500M8 15.500a7.500 7.500 0 017-5.500M11 16a4 4 0 014-3" />
          <circle cx="14.500" cy="15.500" r="1" fill="#fff" />
        </svg>
        <svg width="20" height="18" viewBox="0 0 20 18" fill="none" stroke="#fff" strokeWidth="1.300" className="ml-[9px]">
          <path d="M1 6.500h3.500L9 2.500v13l-4.500-4H1zM11.500 6.500a4 4 0 010 5M14 4.500a7 7 0 010 9M16.500 2.500a10.500 10.500 0 010 13" />
        </svg>
        <svg width="20" height="20" viewBox="0 0 20 20" className="ml-[11px]">
          <path d="M5.500 1L10 3.800 5.500 6.600 1 3.800zM14.500 1L19 3.800l-4.500 2.800L10 3.800zM14.500 6.600L19 9.500l-4.500 2.800L10 9.500z" fill="#fff" />
          <rect x="1" y="8" width="11" height="11" rx="2" fill="#e01b24" />
          <path d="M5 11.500l2-1.500v7M5 17h4" stroke="#fff" strokeWidth="1.300" fill="none" />
        </svg>
        <div className="ml-[10px] w-[70px] text-center text-[14.500px] leading-[22px] tracking-[-0.3px]">
          <div className="whitespace-nowrap">10:37 PM</div>
          <div className="whitespace-nowrap">1/15/2022</div>
        </div>
        <svg width="22" height="21" viewBox="0 0 22 21" fill="none" stroke="#fff" strokeWidth="1.400" className="ml-[22px] mr-[31px]">
          <path d="M1 1.500h19.500v14h-7L10.700 19v-3.500H1z" />
        </svg>
      </div>
    </div>
  );
}

export default function App() {
  return (
    <div className="flex h-[1080px] w-[1920px] flex-col overflow-hidden bg-[#282828] font-['Open_Sans','Noto_Sans',sans-serif]">
      <TitleBar />
      <MenuBar />
      <TabBar />
      <Toolbar />
      <div className="flex h-[873px] shrink-0">
        <LeftRail />
        <div className="w-[94px] shrink-0 bg-[#282828]" />
        <Slide />
        <div className="w-[95px] shrink-0 bg-[#282828]" />
        <ScrollBar />
        <div className="flex w-[22px] shrink-0 items-center justify-center border-l border-[#2f2f2f] bg-[#424242] pr-[2px]">
          <span className="border-y-[6px] border-r-[7px] border-y-transparent border-r-[#d0d0d0]" />
        </div>
        <RightRail />
      </div>
      <Taskbar />
    </div>
  );
}
